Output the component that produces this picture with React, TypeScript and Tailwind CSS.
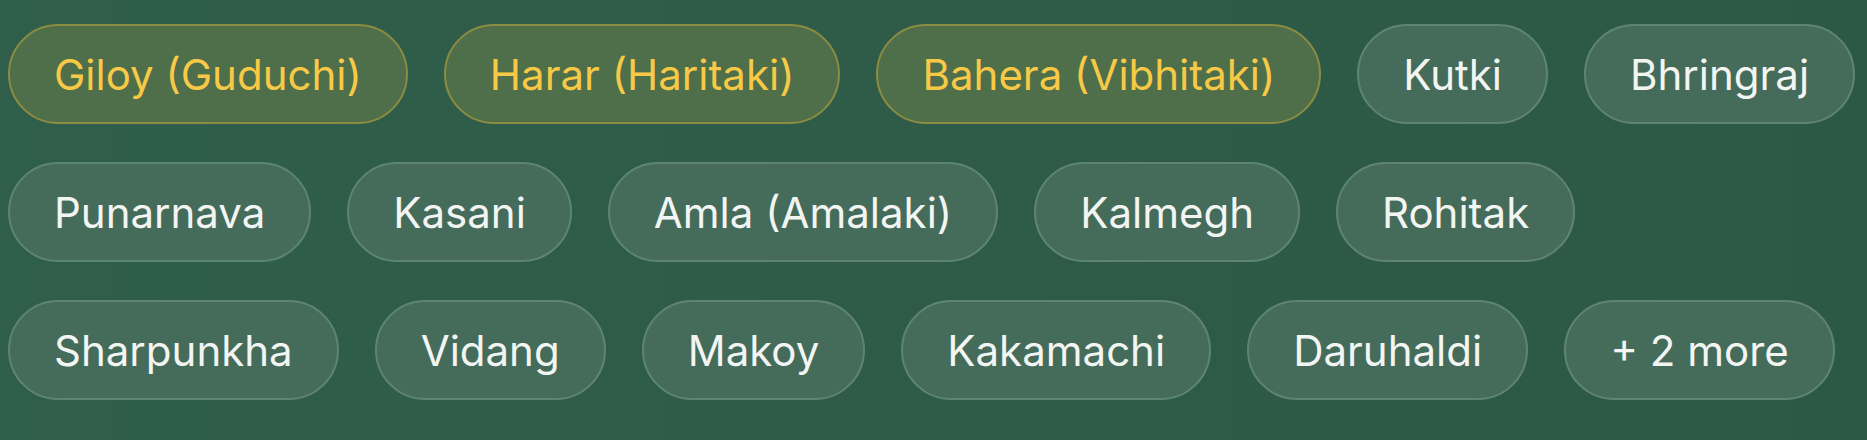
import React from "react";

const gold = ["Giloy (Guduchi)", "Harar (Haritaki)", "Bahera (Vibhitaki)"];
const plain = [
  "Kutki",
  "Bhringraj",
  "Punarnava",
  "Kasani",
  "Amla (Amalaki)",
  "Kalmegh",
  "Rohitak",
  "Sharpunkha",
  "Vidang",
  "Makoy",
  "Kakamachi",
  "Daruhaldi",
  "+ 2 more",
];

export default function App() {
  return (
    <div
      className="w-full h-[440px] bg-gradient-to-r from-[#2f5e4a] to-[#2c5946] pl-[8px] pr-0 pt-[24px]"
      style={{ fontFamily: "Inter, 'Noto Sans', sans-serif" }}
    >
      <div className="flex flex-wrap gap-x-[36px] gap-y-[38px]">
        {gold.map((t) => (
          <span
            key={t}
            className="inline-flex h-[100px] items-center rounded-full border-2 border-[#8b8c42] bg-[#4f6f4a] px-[44px] text-[42px] text-[#f7c946]"
          >
            {t}
          </span>
        ))}
        {plain.map((t) => (
          <span
            key={t}
            className="inline-flex h-[100px] items-center rounded-full border-2 border-[#5f8473] bg-[#456c5b] px-[44px] text-[42px] text-[#f2f5f2]"
          >
            {t}
          </span>
        ))}
      </div>
    </div>
  );
}
